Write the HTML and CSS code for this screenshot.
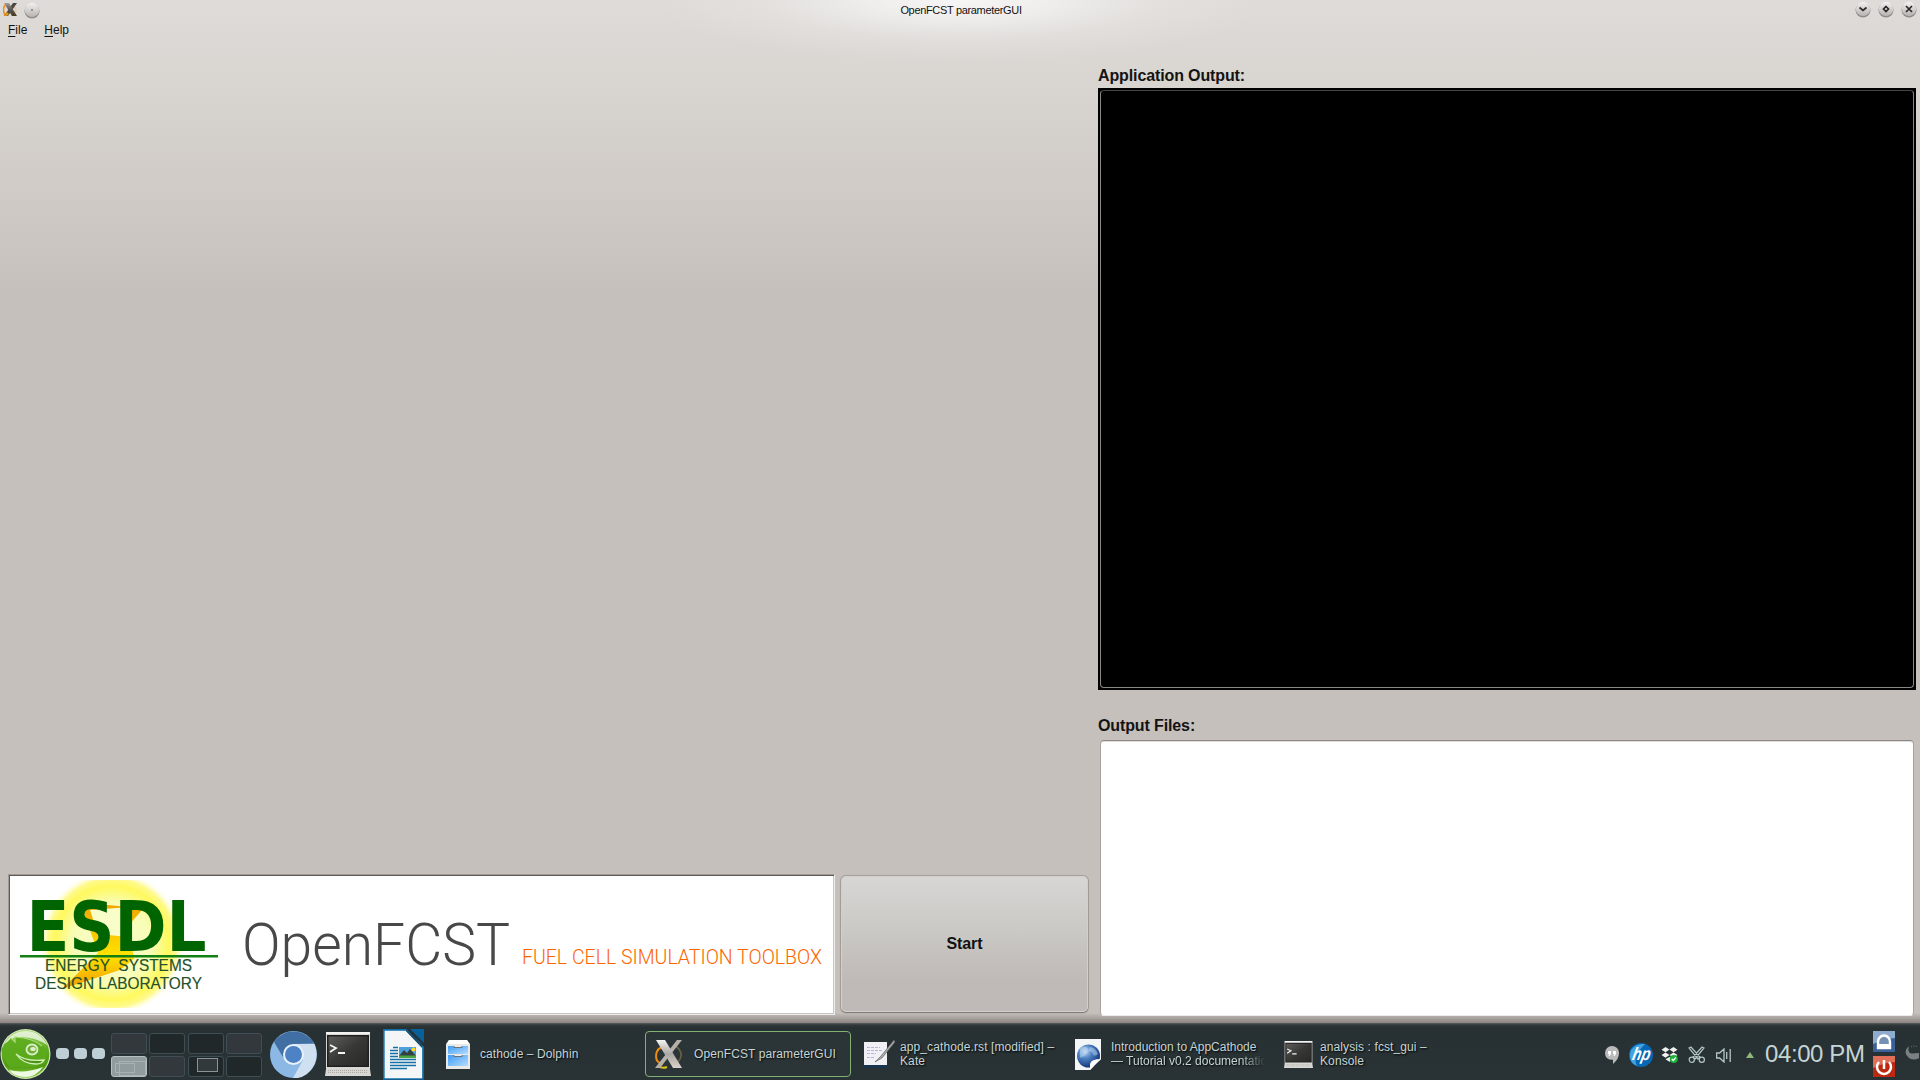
FILE: index.html
```html
<!DOCTYPE html>
<html lang="en">
<head>
<meta charset="utf-8">
<title>OpenFCST parameterGUI</title>
<link rel="stylesheet" href="styles.css">
</head>
<body>
<svg class="defs" width="0" height="0" aria-hidden="true">
  <defs>
    <linearGradient id="btn" x1="0" y1="0" x2="0" y2="1"><stop offset="0" stop-color="#f3f2f1"/><stop offset="1" stop-color="#b5b1ae"/></linearGradient>
    <linearGradient id="xg" x1="0" y1="0" x2="0" y2="1"><stop offset="0" stop-color="#f4f4f4"/><stop offset=".5" stop-color="#aaa6a3"/><stop offset="1" stop-color="#dbd3ca"/></linearGradient>
    <linearGradient id="xs" x1="0" y1="0" x2="0" y2="1"><stop offset="0" stop-color="#a09e9b"/><stop offset=".5" stop-color="#5b5754"/><stop offset="1" stop-color="#463a1d"/></linearGradient>
    <linearGradient id="screen" x1="0" y1="0" x2="1" y2="1"><stop offset="0" stop-color="#5c5c5a"/><stop offset=".5" stop-color="#373736"/><stop offset="1" stop-color="#292929"/></linearGradient>
    <linearGradient id="drawer" x1="0" y1="0" x2="1" y2="1"><stop offset="0" stop-color="#3e9bf5"/><stop offset="1" stop-color="#b5dcff"/></linearGradient>
    <radialGradient id="globe" cx=".35" cy=".3" r=".75"><stop offset="0" stop-color="#c3dcf5"/><stop offset=".4" stop-color="#4f83c4"/><stop offset="1" stop-color="#0c2d72"/></radialGradient>
    <linearGradient id="suse" x1="0" y1="0" x2="0" y2="1"><stop offset="0" stop-color="#a5d76b"/><stop offset=".4" stop-color="#5faa22"/><stop offset=".75" stop-color="#4d9a10"/><stop offset="1" stop-color="#8cd043"/></linearGradient>
    <radialGradient id="sun"><stop offset="0" stop-color="#f6fcd0"/><stop offset=".55" stop-color="#f8fdb5"/><stop offset=".78" stop-color="#fff95e"/><stop offset=".88" stop-color="#fffa8c"/><stop offset="1" stop-color="#fff" stop-opacity="0"/></radialGradient>
    <linearGradient id="bolt" x1="0" y1="0" x2="0" y2="1"><stop offset="0" stop-color="#f2a500"/><stop offset=".6" stop-color="#ffe300"/><stop offset="1" stop-color="#f39a00"/></linearGradient>
    <symbol id="konsole" viewBox="0 0 46 44">
      <path d="M1 1h44v36l1 7H0l1-7z" fill="#d9d7d4"/>
      <rect x="1" y="0" width="44" height="2" fill="#f3f2f0"/>
      <rect x="2" y="3" width="42" height="32" fill="#201f1f"/>
      <rect x="3.500" y="4.500" width="39" height="29" fill="url(#screen)"/>
      <path d="M5 13l6 3-6 4M13 21h7" fill="none" stroke="#f5f5f5" stroke-width="1.800"/>
      <path d="M3 38.500h40M3 40.500h40" stroke="#aaa7a4" stroke-dasharray="1 1"/>
    </symbol>
  </defs>
</svg>

<main class="window">
  <header class="titlebar">
    <div class="title-left">
      <svg width="14" height="15" viewBox="0 0 14 15"><path d="M2 3Q-1 8 2 13" fill="none" stroke="#f58b1e" stroke-width="1.600"/><path d="M11 4q3 3 1 7" fill="none" stroke="#f3c495" stroke-width="1.400"/><path d="M10 1h4L5 14H1z" fill="#4a4643"/><path d="M1 14l3-4 2 2-2 2z" fill="#d79a1a"/><path d="M1 1h5l8 13H9z" fill="url(#xs)"/></svg>
      <svg width="16" height="17" viewBox="0 0 16 17"><circle cx="8" cy="9" r="7.500" fill="#8d8986"/><circle cx="8" cy="8" r="7.200" fill="url(#btn)"/><rect x="7.500" y="7" width="1" height="2" fill="#555"/></svg>
    </div>
    <h1 class="title">OpenFCST parameterGUI</h1>
    <div class="title-right">
      <svg width="16" height="17" viewBox="0 0 16 17"><circle cx="8" cy="9" r="7.500" fill="#8d8986"/><circle cx="8" cy="8" r="7.200" fill="url(#btn)"/><path d="M4.500 6.500L8 9.500l3.500-3" fill="none" stroke="#2a2a2a" stroke-width="1.700"/></svg>
      <svg width="16" height="17" viewBox="0 0 16 17"><circle cx="8" cy="9" r="7.500" fill="#8d8986"/><circle cx="8" cy="8" r="7.200" fill="url(#btn)"/><path d="M8 5.500L10.500 8 8 10.500 5.500 8z" fill="none" stroke="#2a2a2a" stroke-width="1.700"/></svg>
      <svg width="16" height="17" viewBox="0 0 16 17"><circle cx="8" cy="9" r="7.500" fill="#8d8986"/><circle cx="8" cy="8" r="7.200" fill="url(#btn)"/><path d="M5 5l6 6M11 5l-6 6" fill="none" stroke="#2a2a2a" stroke-width="1.700"/></svg>
    </div>
  </header>
  <nav class="menubar"><span><u>F</u>ile</span><span><u>H</u>elp</span></nav>

  <div class="content">
    <section class="left">
      <div class="banner">
        <svg width="824" height="138" viewBox="9 875 824 138">
          <clipPath id="sunclip"><rect x="30" y="880" width="160" height="128"/></clipPath>
          <ellipse cx="112" cy="943" rx="73" ry="73" fill="url(#sun)" clip-path="url(#sunclip)"/>
          <path d="M108 905q22 2 34 5l-14 16 6 33-14 11-58 19 36-36-14-40q4-7 20-8z" fill="url(#bolt)"/>
          <path d="M90 910l40-3-2 30-30-3z" fill="#f9fdc8"/>
          <g class="esdl"><text x="26.500" y="951" textLength="180" lengthAdjust="spacingAndGlyphs">ESDL</text></g>
          <rect x="20" y="955" width="198" height="2.500" fill="#128012"/>
          <text class="lab" x="45" y="970.500" textLength="147" lengthAdjust="spacingAndGlyphs" xml:space="preserve">ENERGY  SYSTEMS</text>
          <text class="lab" x="35" y="989" textLength="167" lengthAdjust="spacingAndGlyphs">DESIGN LABORATORY</text>
          <text class="brand" x="242" y="964.500" textLength="268" lengthAdjust="spacingAndGlyphs">OpenFCST</text>
          <text class="tagline" x="522" y="964" textLength="300" lengthAdjust="spacingAndGlyphs">FUEL CELL SIMULATION TOOLBOX</text>
        </svg>
      </div>
      <button class="start">Start</button>
    </section>
    <section class="right">
      <h2 class="label">Application Output:</h2>
      <div class="console"><div class="console-frame"></div></div>
      <h2 class="label files-label">Output Files:</h2>
      <div class="files"></div>
    </section>
  </div>
</main>

<footer class="taskbar">
  <svg class="menu-btn" width="51" height="52" viewBox="0 0 51 52">
    <circle cx="25.500" cy="25" r="25" fill="#cfe8b3"/><circle cx="25.500" cy="25" r="23.800" fill="url(#suse)"/>
    <path d="M4 15Q12 2 26 2t21 14Q32 6 14 9z" fill="#fff" opacity=".7"/>
    <path d="M1 20L11 9l3 3 1-4q20 1 29 10l3 7-2 8q-6 5-14 5H10Q3 32 1 20z" fill="#5cab1d" opacity=".9"/>
    <path d="M11 9l4 4V8q18 1 27 9" fill="none" stroke="#a9dd7a" stroke-width="1.200"/>
    <path d="M16 25q9 8 28 6-2 4-8 4-13 0-20-10z" fill="#4a9212" stroke="#d3efb8" stroke-width="1.300"/>
    <ellipse cx="32" cy="20.500" rx="5.500" ry="5" fill="#6bad35" stroke="#dcefc8" stroke-width="1.800"/><ellipse cx="33" cy="20" rx="2.800" ry="2" fill="#dcefc8"/>
    <path d="M9 41q16 4 34-3-7 10-18 10T9 41z" fill="#eef8e2"/>
  </svg>
  <div class="dots"><i></i><i></i><i></i></div>
  <div class="pager">
    <i class="lit"></i><i></i><i></i><i class="lit"></i>
    <i class="current"><b class="mini m1"></b><b class="mini m2"></b></i><i class="lit"></i><i><b class="mini m3"></b></i><i></i>
  </div>
  <div class="launchers">
    <svg width="47" height="47" viewBox="0 0 47 47"><circle cx="23.500" cy="23.500" r="23.500" fill="#8bb8e4"/><path d="M4 11A23.500 23.500 0 0 1 44 12.500L23.500 13 13 26z" fill="#416fa3"/><path d="M23.500 13h21Q51 30 37 43q-7 5-14 4l10-18z" fill="#cfe0f1"/><circle cx="23.500" cy="23.500" r="10.500" fill="#e9f1fa"/><circle cx="23.500" cy="23.500" r="8.500" fill="#4d82c4"/></svg>
    <svg class="big-term" width="46" height="44"><use href="#konsole"/></svg>
    <svg width="41" height="51" viewBox="0 0 41 51"><path d="M.8.800H23L40 18v32H.8z" fill="#f4f5f6" stroke="#0f70ac" stroke-width="1.700"/><path d="M27 0h14v14z" fill="#06609b"/><path d="M23 1v1l16 17V14z" fill="#174b6b"/><path d="M7 21.500h8M7 24.500h8M7 27.500h8M7 30.500h26M7 33.500h26M7 36.500h26M7 39.500h17M10 18.500h5" stroke="#1570a6" stroke-width="1.500"/><rect x="16" y="18" width="17" height="11" fill="#4d9fdb"/><path d="M16 27l5-6 3 3 3-4 6 7v2H16z" fill="#33413e"/><path d="M16 26.500h17V29H16z" fill="#4aa541"/><circle cx="30.500" cy="20.500" r="2" fill="#ffd52d"/></svg>
  </div>
  <div class="tasks">
    <div class="task">
      <svg width="24" height="29" viewBox="0 0 24 29"><path d="M3 0h18l3 4v25H0V4z" fill="#e9e9e8"/><path d="M3 0h18l2 4H1z" fill="#fff"/><rect x="2" y="6" width="20" height="8" fill="url(#drawer)"/><rect x="2" y="15" width="20" height="11" fill="url(#drawer)"/><path d="M8 6v1.500h8V6M8 15v1.500h8V15" fill="#eee" stroke="#666" stroke-width=".9"/></svg>
      <span>cathode – Dolphin</span>
    </div>
    <div class="task active">
      <svg width="29" height="30" viewBox="0 0 29 30"><path d="M12 6Q2 9 2 17q0 7 7 8" fill="none" stroke="#ef8d10" stroke-width="2"/><path d="M19 6q9 4 8 11-1 7-9 8" fill="none" stroke="#6c6244" stroke-width="1.600"/><path d="M5 27q3 3 8 1" fill="none" stroke="#d7c80f" stroke-width="2"/><path d="M23 1h5L6 29H1z" fill="#b5afa8"/><path d="M2 1h9l17 28h-9z" fill="url(#xg)"/></svg>
      <span>OpenFCST parameterGUI</span>
    </div>
    <div class="task kate">
      <svg width="31" height="29" viewBox="0 0 31 29"><rect x="0" y="23" width="23" height="5" fill="#18344e"/><rect x="0" y="2" width="23" height="23" fill="#f1f1f5"/><path d="M3 7.500h13M3 10.500h15M3 13.500h9M3 17.500h8" stroke="#b5b5df" stroke-dasharray="3 1"/><path d="M30 0L17 16l-6 6 7-4L31 2z" fill="#a9a9a9" stroke="#575757" stroke-width=".6"/></svg>
      <span>app_cathode.rst [modified] –<br>Kate</span>
    </div>
    <div class="task web">
      <svg width="26" height="31" viewBox="0 0 26 31"><path d="M0 0h26v20L15 31H0z" fill="#f4f5f7"/><circle cx="13.500" cy="17" r="11.500" fill="url(#globe)"/><path d="M5 9q7-3 8 1t-4 7-4 1zM15 8q6 1 8 7-4 3-5 0t-5-3z" fill="#c2dcf5" opacity=".5"/><path d="M26 20L15 31v-6q1-5 11-5z" fill="#fff"/></svg>
      <span>Introduction to AppCathode<br><span class="fade">— Tutorial v0.2 documentatio</span></span>
    </div>
    <div class="task term">
      <svg width="29" height="27" viewBox="0 0 46 44" preserveAspectRatio="none"><use href="#konsole" width="46" height="44"/></svg>
      <span>analysis : fcst_gui –<br>Konsole</span>
    </div>
  </div>
  <div class="tray">
    <svg width="14" height="18" viewBox="0 0 14 18"><path d="M7 0a7 6.800 0 0 1 7 7q0 6-6 11v-4.200Q0 14 0 7a7 7 0 0 1 7-7z" fill="#b9bab9"/><path d="M3 5h3v3l-1.500 2H3.500L4 8H3zM8 5h3v3l-1.500 2H8.500L9 8H8z" fill="#fff"/></svg>
    <svg width="24" height="24" viewBox="0 0 24 24"><circle cx="12" cy="12" r="12" fill="#0668b4"/><path d="M2 7Q7 0 16 1 10 7 8 12 5 18 8 23-2 19 2 7z" fill="#43a3df"/><g transform="translate(4 0) skewX(-12)"><text class="hp" x="2" y="17" textLength="18" lengthAdjust="spacingAndGlyphs">hp</text></g></svg>
    <svg width="17" height="16" viewBox="0 0 17 16"><path d="M4.500 0l4 2.500-4 2.700L.5 2.700zM12.500 0l4 2.700-4 2.500-4-2.700zM4.500 5.500l4 2.600-4 2.600-4-2.600zM12.500 5.500l4 2.600-4 2.600-4-2.600zM8.500 10l4 2.200-4 2.600-4-2.600z" fill="#f0f2f2"/><circle cx="12.800" cy="12" r="4" fill="#1eb43a"/><path d="M10.800 12l1.500 1.500 2.500-3" fill="none" stroke="#fff" stroke-width="1.200"/></svg>
    <svg width="18" height="18" viewBox="0 0 18 18"><g fill="none" stroke="#b4c6c7" stroke-width="1.200"><path d="M1 2l2-1 9 10-2 2zM16 2l-2-1L5 11l2 2z"/><circle cx="3.800" cy="13.800" r="2.600"/><circle cx="13.800" cy="13.800" r="2.600"/></g></svg>
    <svg width="16" height="15" viewBox="0 0 16 15"><path d="M.6 5h3L8 1v13L3.600 10h-3zM10.700 4v7M14.200 1v13" fill="none" stroke="#b4c6c7" stroke-width="1.300"/></svg>
    <svg width="8" height="6" viewBox="0 0 8 6"><path d="M4 0l4 6H0z" fill="#8eb978"/></svg>
  </div>
  <div class="clock">04:00 PM</div>
  <div class="session">
    <svg width="22" height="21" viewBox="0 0 22 21"><rect width="22" height="21" fill="#3b619b"/><path d="M0 0h22v7Q12 7 0 13z" fill="#8facd0"/><path d="M5 17v-6a6 6.500 0 0 1 12 0v6z" fill="#7690b4" stroke="#fff" stroke-width="2.400"/><path d="M5 13h12v4H5z" fill="#fff"/></svg>
    <svg width="22" height="21" viewBox="0 0 22 21"><rect width="22" height="21" fill="#bd2811"/><path d="M0 0h22v6Q12 6 0 12z" fill="#df6f58"/><path d="M6 6a7 7 0 1 0 10 0M11 4v9" fill="none" stroke="#fff" stroke-width="2.500"/></svg>
  </div>
  <svg class="cashew" width="14" height="15" viewBox="0 0 14 15"><path d="M4 1Q2 8 7 8.500L14 8v5Q9 16 4 13-3 7 4 1z" fill="#7b8182"/><path d="M6 2q3-2 7 0" fill="none" stroke="#7b8182" stroke-dasharray="1 1.500"/></svg>
</footer>
</body>
</html>
```

FILE: styles.css
```css
* { box-sizing: border-box; }
body {
  margin: 0;
  width: 1920px;
  height: 1080px;
  overflow: hidden;
  display: flex;
  flex-direction: column;
  font-family: "Liberation Sans", Arial, sans-serif;
  color: #141312;
}
svg { display: block; flex: none; }
.defs { position: absolute; }

.window {
  height: 1023px;
  flex: none;
  display: flex;
  flex-direction: column;
  background:
    linear-gradient(to bottom, rgba(90, 82, 78, 0), rgba(90, 82, 78, .55)) 0 100% / 100% 10px no-repeat,
    radial-gradient(ellipse 310px 62px at 960px 0, #f7f6f6 0%, rgba(242, 242, 240, .8) 30%, rgba(232, 231, 229, .4) 65%, rgba(222, 218, 215, 0) 100%),
    linear-gradient(to bottom, #dfdbd8 0, #d8d4d0 90px, #cfcac6 200px, #c6c0bc 295px, #c6c0bc 100%);
}
.titlebar {
  height: 20px;
  display: grid;
  grid-template-columns: 1fr auto 1fr;
  padding: 1px 3px 0 3px;
}
.title-left { display: flex; gap: 7px; }
.title-left svg { margin-top: 1px; }
.title-right { display: flex; gap: 7px; justify-content: flex-end; }
.title { margin: 0; font-size: 11px; font-weight: 400; line-height: 18px; letter-spacing: -.33px; position: relative; left: 1px; }
.menubar { height: 20px; display: flex; gap: 17px; padding-left: 8px; font-size: 12px; line-height: 20px; }
.menubar u { text-underline-offset: 2px; }

.content { flex: 1; display: flex; gap: 10px; padding-left: 8px; }
.left { width: 1080px; display: flex; gap: 6px; align-items: flex-end; padding-bottom: 8px; }
.banner {
  width: 827px;
  height: 141px;
  border: 1px solid;
  border-color: #a09b97 #efedec #efedec #a09b97;
  background: #fff;
  box-shadow: inset 1px 1px 0 #5c5957, inset -1px -1px 0 #c6c6c6;
}
.esdl { font: bold 69px "DejaVu Sans", sans-serif; fill: #006400; }
.lab { font-size: 16.500px; fill: #24502a; stroke: #24502a; stroke-width: .15; }
.brand { font-family: Roboto, sans-serif; font-weight: 300; font-size: 60px; fill: #484848; }
.tagline { font-family: Roboto, sans-serif; font-weight: 300; font-size: 20.500px; fill: #fb6500; }
.start {
  width: 247px;
  height: 136px;
  margin-bottom: 3px;
  padding: 0;
  font: bold 16px "Liberation Sans", Arial, sans-serif;
  letter-spacing: -.1px;
  color: #111;
  border: 1px solid #d2d0cd;
  border-radius: 5px;
  background: linear-gradient(to bottom, #d7d6d4 0%, #c8c7c3 45%, #c4bfbc 62%, #bfbab7 78%, #bfbab7 100%);
  box-shadow: 0 1px 1px #7d7875, 0 0 1px 1px #a39e9a;
}
.right { width: 818px; display: flex; flex-direction: column; }
.label { margin: 24px 0 0; height: 24px; font-size: 16px; line-height: 24px; font-weight: 700; letter-spacing: -.12px; }
.console { height: 602px; background: #000; padding: 2px; }
.console-frame { height: 598px; border: 1px solid #8b8783; border-top-color: #444; border-radius: 4px; }
.files-label { margin-top: 24px; height: 26px; }
.files {
  width: 814px;
  height: 276px;
  margin-left: 2px;
  background: #fff;
  border: 1px solid #aaa29f;
  border-top-color: #8e8986;
  border-bottom-color: #eeeceb;
  border-radius: 4px;
  box-shadow: inset 0 1px 0 #dedcdb;
}

.taskbar {
  height: 57px;
  flex: none;
  display: flex;
  align-items: flex-start;
  color: #c5d5d5;
  background: linear-gradient(to bottom, #596060 0, #30383a 2px, #273032 5px, #293234 100%);
}
.menu-btn { margin-top: 6px; }
.dots { display: flex; gap: 5px; margin: 25px 0 0 5px; }
.dots i { width: 13px; height: 11px; border-radius: 4px; background: #bed0d5; }
.pager { display: grid; grid-template-columns: 36px 37px 36px 36px; gap: 2px; margin: 10px 0 0 6px; }
.pager i { width: 36px; height: 21px; border: 1px solid #3f4e54; border-radius: 3px; background: #20282a; position: relative; }
.pager i.lit { background: #32383b; }
.pager i.current { background: #919c9e; border-color: #b4bfc0; }
.mini { position: absolute; border: 1px solid #a8b2b4; }
.m1 { left: 3px; top: 6px; width: 20px; height: 10px; }
.m2 { left: 7px; top: 4px; width: 27px; height: 15px; }
.m3 { left: 8px; top: 1px; width: 21px; height: 14px; border-color: #8b9495; background: #32383b; }
.launchers { display: flex; gap: 9px; margin-left: 8px; padding-top: 6px; }
.launchers svg:first-child { margin-top: 2px; }
.launchers .big-term { margin: 3px 0 0 -1px; }
.launchers svg:last-child { margin-left: 3px; }
.tasks { display: flex; width: 1050px; margin: 8px 0 0 11px; }
.task {
  width: 210px;
  flex: none;
  height: 46px;
  display: flex;
  align-items: center;
  padding-left: 11px;
  gap: 10px;
  font-size: 12px;
  line-height: 14px;
  white-space: nowrap;
  text-shadow: 1px 1px 2px #000;
  letter-spacing: .1px;
}
.active { width: 206px; margin-right: 4px; padding-left: 8px; gap: 11px; border: 1px solid #83b074; border-radius: 4px; background: #2b3538; }
.kate { padding-left: 9px; gap: 5px; }
.web { padding-left: 10px; letter-spacing: 0; }
.fade { -webkit-mask-image: linear-gradient(to right, #000 130px, transparent 155px); mask-image: linear-gradient(to right, #000 130px, transparent 155px); }
.term { padding-left: 9px; gap: 7px; }
.tray { display: flex; align-items: center; height: 50px; margin: 7px 0 0 120px; gap: 10px; }
.tray svg:nth-child(3) { margin-left: -2px; }
.tray svg:nth-child(6) { margin-left: 4px; }
.hp { font: italic bold 18px "Liberation Sans", sans-serif; fill: #fff; }
.clock { width: 104px; margin: 17px 0 0 11px; font-size: 24px; line-height: 28px; white-space: nowrap; letter-spacing: -.4px; }
.session { display: flex; flex-direction: column; gap: 4px; margin: 8px 0 0 4px; }
.cashew { margin: 22px 0 0 10px; }
```
